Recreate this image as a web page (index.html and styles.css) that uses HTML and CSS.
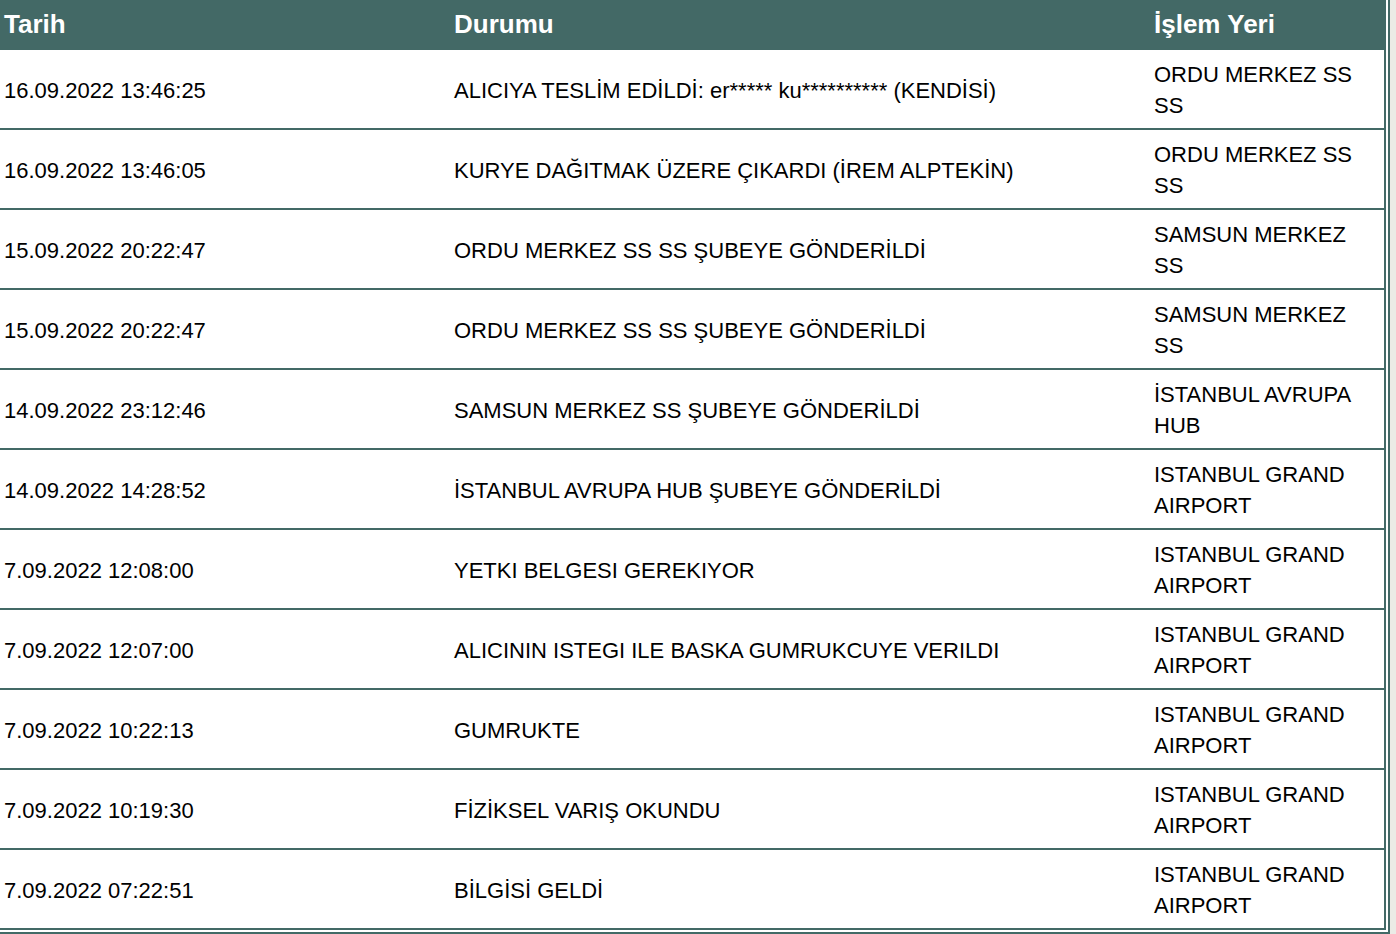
FILE: index.html
```html
<!DOCTYPE html>
<html lang="tr">
<head>
<meta charset="utf-8">
<title>Kargo Hareketleri</title>
<link rel="stylesheet" href="styles.css">
</head>
<body>
<div class="wrap">
<table class="moves">
<colgroup><col class="c-date"><col class="c-status"><col class="c-place"></colgroup>
<thead>
<tr><th>Tarih</th><th>Durumu</th><th class="last">İşlem Yeri</th></tr>
</thead>
<tbody>
<tr><td>16.09.2022 13:46:25</td><td>ALICIYA TESLİM EDİLDİ: er***** ku********** (KENDİSİ)</td><td class="last">ORDU MERKEZ SS SS</td></tr>
<tr><td>16.09.2022 13:46:05</td><td>KURYE DAĞITMAK ÜZERE ÇIKARDI (İREM ALPTEKİN)</td><td class="last">ORDU MERKEZ SS SS</td></tr>
<tr><td>15.09.2022 20:22:47</td><td>ORDU MERKEZ SS SS ŞUBEYE GÖNDERİLDİ</td><td class="last">SAMSUN MERKEZ SS</td></tr>
<tr><td>15.09.2022 20:22:47</td><td>ORDU MERKEZ SS SS ŞUBEYE GÖNDERİLDİ</td><td class="last">SAMSUN MERKEZ SS</td></tr>
<tr><td>14.09.2022 23:12:46</td><td>SAMSUN MERKEZ SS ŞUBEYE GÖNDERİLDİ</td><td class="last">İSTANBUL AVRUPA HUB</td></tr>
<tr><td>14.09.2022 14:28:52</td><td>İSTANBUL AVRUPA HUB ŞUBEYE GÖNDERİLDİ</td><td class="last">ISTANBUL GRAND AIRPORT</td></tr>
<tr><td>7.09.2022 12:08:00</td><td>YETKI BELGESI GEREKIYOR</td><td class="last">ISTANBUL GRAND AIRPORT</td></tr>
<tr><td>7.09.2022 12:07:00</td><td>ALICININ ISTEGI ILE BASKA GUMRUKCUYE VERILDI</td><td class="last">ISTANBUL GRAND AIRPORT</td></tr>
<tr><td>7.09.2022 10:22:13</td><td>GUMRUKTE</td><td class="last">ISTANBUL GRAND AIRPORT</td></tr>
<tr><td>7.09.2022 10:19:30</td><td>FİZİKSEL VARIŞ OKUNDU</td><td class="last">ISTANBUL GRAND AIRPORT</td></tr>
<tr><td>7.09.2022 07:22:51</td><td>BİLGİSİ GELDİ</td><td class="last">ISTANBUL GRAND AIRPORT</td></tr>
</tbody>
</table>
</div>
</body>
</html>
```
FILE: styles.css
```css
html, body {
  margin: 0;
  padding: 0;
}
body {
  background: #ebebe6;
  font-family: "Liberation Sans", Arial, sans-serif;
  color: #000;
}
.wrap {
  width: 1386px;
  background: #fff;
  padding: 0 2px 2px 0;
  border-right: 2px solid #436966;
  border-bottom: 2px solid #436966;
}
.moves {
  width: 1386px;
  table-layout: fixed;
  border-collapse: separate;
  border-spacing: 0;
}
.c-date { width: 450px; }
.c-status { width: 700px; }
.c-place { width: 236px; }
.moves th {
  background: #436966;
  color: #fff;
  font-size: 26px;
  font-weight: bold;
  text-align: left;
  height: 48px;
  padding: 0 8px 0 4px;
  border-bottom: 2px solid #436966;
  vertical-align: middle;
}
.moves td {
  font-size: 22px;
  line-height: 31px;
  height: 76px;
  padding: 2px 8px 0 4px;
  border-bottom: 2px solid #436966;
  vertical-align: middle;
}
.moves .last {
  border-right: 2px solid #436966;
}
```
